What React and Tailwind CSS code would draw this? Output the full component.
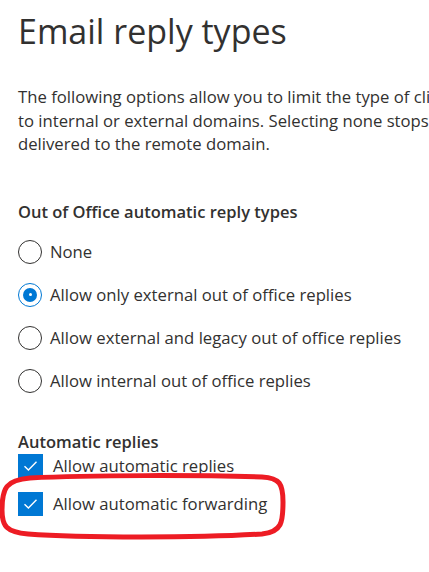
import { useState } from 'react';

const RADIO_OPTIONS = [
  'None',
  'Allow only external out of office replies',
  'Allow external and legacy out of office replies',
  'Allow internal out of office replies',
];

function Radio({ checked }) {
  return (
    <span
      className={`flex h-[24px] w-[24px] shrink-0 items-center justify-center rounded-full border ${
        checked ? 'border-[#0078d4]' : 'border-[#323130]'
      }`}
    >
      {checked && (
        <span className="flex h-[14px] w-[14px] items-center justify-center rounded-full bg-[#0078d4]">
          <span className="h-[3px] w-[3px] rounded-full bg-white" />
        </span>
      )}
    </span>
  );
}

function Checkbox() {
  return (
    <span className="flex h-[24px] w-[25px] shrink-0 items-center justify-center bg-[#0078d4]">
      <svg width="15" height="12" viewBox="0 0 15 12" fill="none">
        <path d="M1.5 6.2 L5.4 10 L13.5 1.8" stroke="white" strokeWidth="1.4" />
      </svg>
    </span>
  );
}

export default function App() {
  const [selected, setSelected] = useState(1);

  return (
    <div
      className="relative h-[572px] w-[429px] overflow-hidden bg-white pl-[18px] text-[#323130]"
      style={{ fontFamily: '"Open Sans", "Noto Sans", sans-serif' }}
    >
      {/* Título */}
      <h1 className="pt-[8px] text-[34px] leading-[46px] font-normal whitespace-nowrap">Email reply types</h1>

      {/* Descripción */}
      <div className="mt-[31px] w-[600px] text-[16.7px] leading-[23.5px] whitespace-nowrap">
        <div>The following options allow you to limit the type of client-originated automatic replies</div>
        <div>to internal or external domains. Selecting none stops automatic replies from being</div>
        <div>delivered to the remote domain.</div>
      </div>

      {/* Respuestas fuera de oficina */}
      <div className="mt-[45px] text-[16.5px] leading-[22px] font-semibold whitespace-nowrap">
        Out of Office automatic reply types
      </div>
      <div className="mt-[17px] flex flex-col gap-[19px]">
        {RADIO_OPTIONS.map((label, i) => (
          <button
            key={label}
            onClick={() => setSelected(i)}
            className="flex h-[24px] items-center gap-[8px] text-left text-[16.7px] whitespace-nowrap"
          >
            <Radio checked={selected === i} />
            <span>{label}</span>
          </button>
        ))}
      </div>

      {/* Respuestas automáticas */}
      <div className="mt-[38px] text-[16.5px] leading-[22px] font-semibold whitespace-nowrap">Automatic replies</div>
      <div className="mt-[1px] flex flex-col gap-[14px]">
        <div className="flex h-[24px] items-center gap-[10px] text-[16.7px] whitespace-nowrap">
          <Checkbox />
          <span>Allow automatic replies</span>
        </div>
        <div className="flex h-[24px] items-center gap-[10px] text-[16.7px] whitespace-nowrap">
          <Checkbox />
          <span>Allow automatic forwarding</span>
        </div>
      </div>

      {/* Marca roja a mano */}
      <svg className="pointer-events-none absolute left-0 top-[472px]" width="290" height="68" viewBox="0 0 290 68" fill="none">
        <path
          d="M30 6 C 90 3, 200 3, 262 5 C 280 6, 283 12, 283 30 C 283 50, 282 60, 262 62 C 200 66, 80 66, 28 62 C 6 60, 2 54, 2 38 C 2 16, 6 8, 30 6 Z"
          stroke="#ed1c24"
          strokeWidth="5"
        />
      </svg>
    </div>
  );
}
